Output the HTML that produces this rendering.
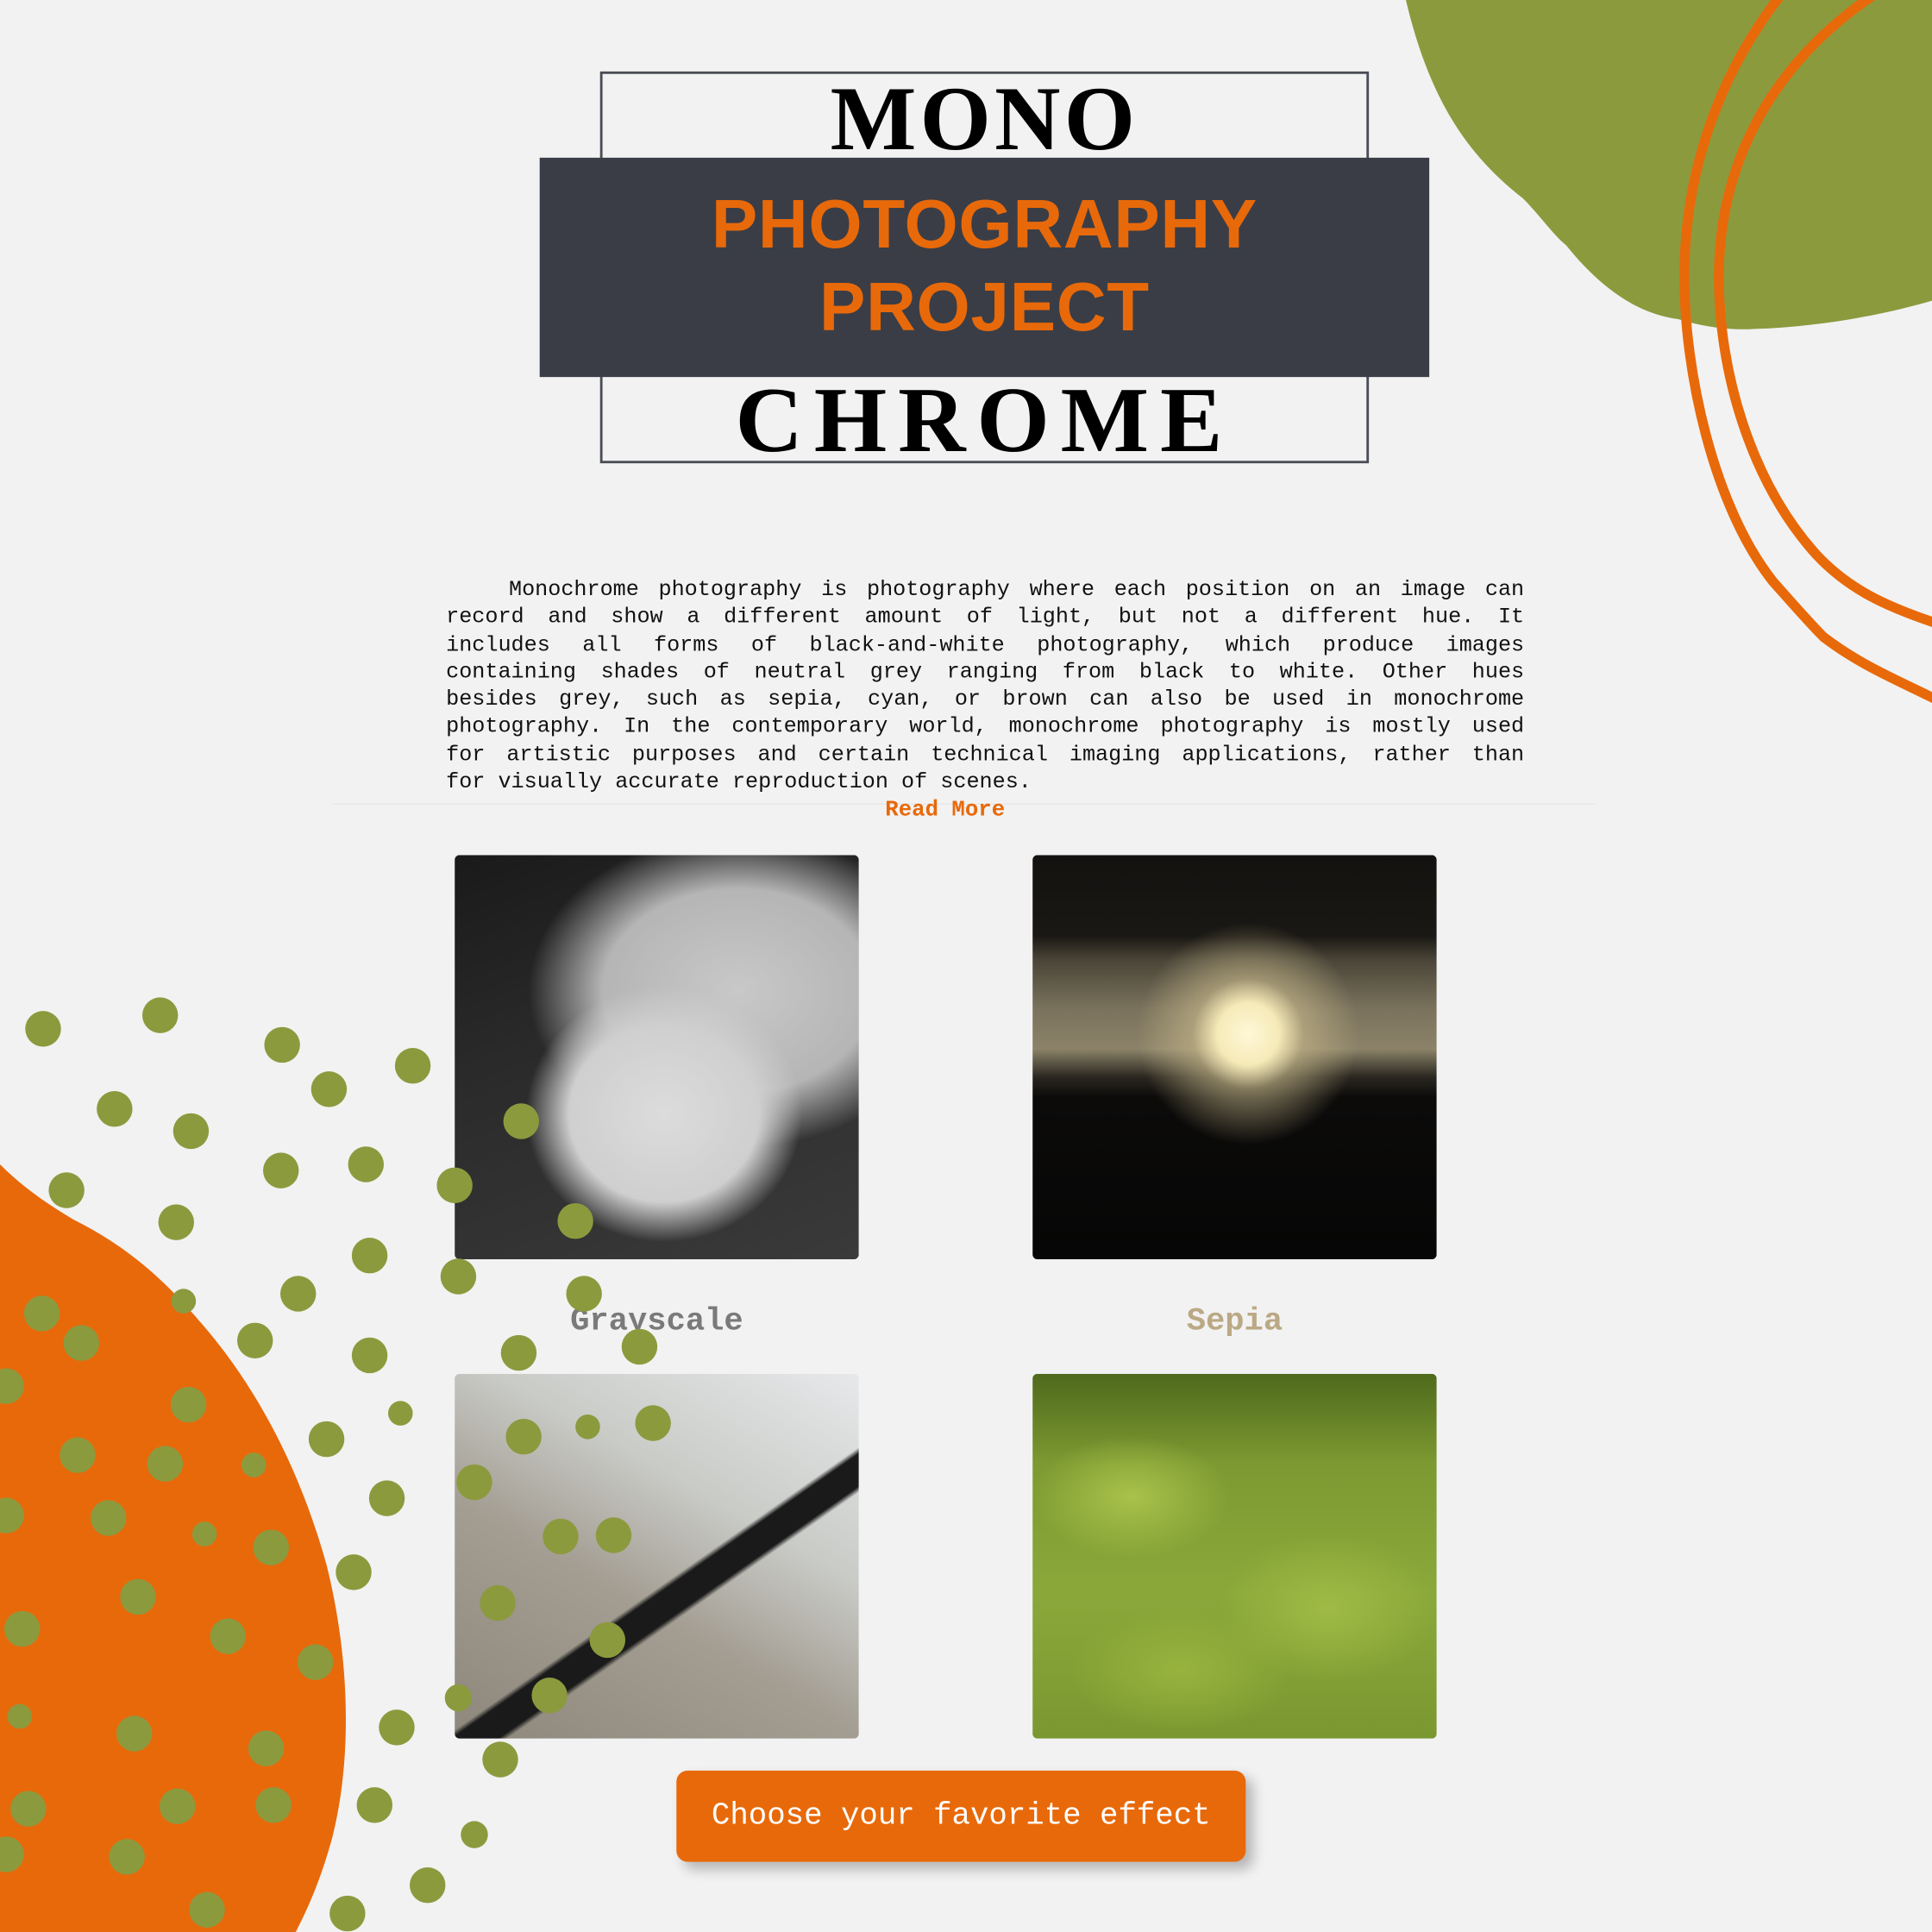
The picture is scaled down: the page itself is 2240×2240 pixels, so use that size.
<!DOCTYPE html>
<html><head><meta charset="utf-8"><style>
html,body{margin:0;padding:0;width:2240px;height:2240px;overflow:hidden;background:#f2f2f2}
#w{position:absolute;left:0;top:0;width:1568px;height:1568px;transform:scale(1.428571);transform-origin:0 0;background:#f2f2f2;overflow:hidden}
.abs{position:absolute}
svg.bg{position:absolute;left:0;top:0}
.frame{left:487px;top:58px;width:620px;height:314px;border:2px solid #4a4d55}
.dark{left:438px;top:128px;width:722px;height:178px;background:#3a3d46}
.mono{left:438px;width:722px;text-align:center;font-family:"Liberation Serif",serif;font-weight:bold;color:#000}
.ph{left:438px;width:722px;text-align:center;font-family:"Liberation Sans",sans-serif;font-weight:bold;color:#e8690a;font-size:56px;line-height:67px;top:148px;letter-spacing:0.5px}
.para{left:362px;top:468px;width:875px;font-family:"Liberation Mono",monospace;font-size:17.6px;line-height:22.3px;color:#111}
.para div{text-align:justify;text-align-last:justify;white-space:nowrap}
.img{border-radius:4px;overflow:hidden}
.lbl{font-family:"Liberation Mono",monospace;font-weight:bold;font-size:26px;text-align:center;width:328px}
</style></head><body><div id="w">
<svg class="bg" width="1568" height="1568" viewBox="0 0 1568 1568">
<path d="M1141,0 C1160,80 1190,125 1236,161 C1250,175 1260,190 1271,199 C1300,235 1330,255 1362,259 C1385,266 1405,268 1424,267 C1480,265 1530,255 1568,244 L1568,0 Z" fill="#8c9a3e"/>
<path d="M1446,-5 C1395,60 1367,140 1367,225 C1367,300 1390,410 1439,472 C1455,490 1468,505 1480,517 C1510,540 1540,552 1572,568" fill="none" stroke="#e8690a" stroke-width="8"/>
<path d="M1522,-5 C1440,50 1395,130 1395,225 C1395,300 1420,390 1474,450 C1500,478 1530,492 1572,506" fill="none" stroke="#e8690a" stroke-width="8"/>
</svg>
<div class="abs frame"></div>
<div class="abs dark"></div>
<div class="abs mono" style="top:52px;font-size:74px;line-height:90px;letter-spacing:3px">MONO</div>
<div class="abs mono" style="top:296px;font-size:76px;line-height:90px;letter-spacing:9px">CHROME</div>
<div class="abs ph">PHOTOGRAPHY<br>PROJECT</div>
<div class="abs para">
<div style="text-indent:51px">Monochrome photography is photography where each position on an image can</div>
<div>record and show a different amount of light, but not a different hue. It</div>
<div>includes all forms of black-and-white photography, which produce images</div>
<div>containing shades of neutral grey ranging from black to white. Other hues</div>
<div>besides grey, such as sepia, cyan, or brown can also be used in monochrome</div>
<div>photography. In the contemporary world, monochrome photography is mostly used</div>
<div>for artistic purposes and certain technical imaging applications, rather than</div>
<div style="text-align-last:left">for visually accurate reproduction of scenes.</div>
</div>
<div class="abs" style="left:270px;top:652px;width:1025px;height:1px;background:#e6e6e6"></div>
<div class="abs" style="left:600px;top:648px;width:334px;text-align:center;font-family:'Liberation Mono',monospace;font-weight:bold;font-size:18px;color:#e8690a">Read More</div>

<div class="abs img" style="left:369px;top:694px;width:328px;height:328px;background:
radial-gradient(ellipse 140px 130px at 170px 210px,#dcdcdc 0%,#cfcfcf 55%,rgba(190,190,190,0) 80%),
radial-gradient(ellipse 200px 150px at 230px 110px,#c8c8c8 0%,#b5b5b5 55%,rgba(120,120,120,0) 85%),
linear-gradient(160deg,#1a1a1a 0%,#2a2a2a 40%,#3a3a3a 100%)"></div>
<div class="abs img" style="left:838px;top:694px;width:328px;height:328px;background:
radial-gradient(circle at 175px 145px,#fff8d8 0,#f5eab8 25px,rgba(200,185,140,.6) 45px,rgba(120,110,85,0) 90px),
linear-gradient(180deg,#131210 0%,#1a1814 20%,#4a4538 26%,#7a725c 38%,#8b8268 48%,#2a2720 55%,#0c0b0a 60%,#060606 100%)"></div>
<div class="abs lbl" style="left:369px;top:1057px;color:#7a7a7a">Grayscale</div>
<div class="abs lbl" style="left:838px;top:1057px;color:#bba985">Sepia</div>
<div class="abs img" style="left:369px;top:1115px;width:328px;height:296px;background:
linear-gradient(145deg,rgba(0,0,0,0) 55%,#1a1a1a 56%,#1a1a1a 61%,rgba(0,0,0,0) 62%),
linear-gradient(30deg,#8d877c 0%,#a39d92 40%,#c9cbc7 65%,#e6e8ea 100%)"></div>
<div class="abs img" style="left:838px;top:1115px;width:328px;height:296px;background:
radial-gradient(ellipse 80px 50px at 80px 100px,#a8c24a,rgba(0,0,0,0)),
radial-gradient(ellipse 90px 60px at 240px 190px,#9fbb45,rgba(0,0,0,0)),
radial-gradient(ellipse 90px 50px at 120px 240px,#98b43e,rgba(0,0,0,0)),
linear-gradient(180deg,#4f6a1c 0%,#7d9a32 25%,#8aa83a 60%,#7a9830 100%)"></div>
<div class="abs" style="left:549px;top:1437px;width:462px;height:74px;background:#e8690a;border-radius:9px;box-shadow:6px 6px 10px rgba(0,0,0,.25);color:#fff;font-family:'Liberation Mono',monospace;font-size:25px;line-height:74px;text-align:center">Choose your favorite effect</div>

<svg class="bg" width="1568" height="1568" viewBox="0 0 1568 1568">
<path d="M0,945 C20,965 40,978 60,990 C100,1010 130,1035 160,1070 C200,1115 240,1180 265,1270 C285,1350 285,1430 270,1490 C262,1520 252,1545 240,1568 L0,1568 Z" fill="#e8690a"/>
<g fill="#8c9a3e">
<circle cx="35" cy="835" r="14.5"/><circle cx="130" cy="824" r="14.5"/><circle cx="229" cy="848" r="14.5"/><circle cx="267" cy="884" r="14.5"/><circle cx="335" cy="865" r="14.5"/><circle cx="93" cy="900" r="14.5"/><circle cx="155" cy="918" r="14.5"/><circle cx="423" cy="910" r="14.5"/><circle cx="54" cy="966" r="14.5"/><circle cx="228" cy="950" r="14.5"/><circle cx="297" cy="945" r="14.5"/><circle cx="369" cy="962" r="14.5"/><circle cx="143" cy="992" r="14.5"/><circle cx="467" cy="991" r="14.5"/><circle cx="300" cy="1019" r="14.5"/><circle cx="372" cy="1036" r="14.5"/><circle cx="242" cy="1050" r="14.5"/><circle cx="149" cy="1056" r="10"/><circle cx="474" cy="1050" r="14.5"/><circle cx="34" cy="1066" r="14.5"/><circle cx="66" cy="1090" r="14.5"/><circle cx="207" cy="1088" r="14.5"/><circle cx="421" cy="1098" r="14.5"/><circle cx="519" cy="1093" r="14.5"/><circle cx="300" cy="1100" r="14.5"/><circle cx="5" cy="1125" r="14.5"/><circle cx="153" cy="1140" r="14.5"/><circle cx="325" cy="1147" r="10"/><circle cx="530" cy="1155" r="14.5"/><circle cx="265" cy="1168" r="14.5"/><circle cx="425" cy="1166" r="14.5"/><circle cx="477" cy="1158" r="10"/><circle cx="63" cy="1181" r="14.5"/><circle cx="134" cy="1188" r="14.5"/><circle cx="206" cy="1189" r="10"/><circle cx="385" cy="1203" r="14.5"/><circle cx="314" cy="1216" r="14.5"/><circle cx="5" cy="1230" r="14.5"/><circle cx="88" cy="1232" r="14.5"/><circle cx="166" cy="1245" r="10"/><circle cx="220" cy="1256" r="14.5"/><circle cx="455" cy="1247" r="14.5"/><circle cx="498" cy="1246" r="14.5"/><circle cx="287" cy="1276" r="14.5"/><circle cx="112" cy="1296" r="14.5"/><circle cx="404" cy="1301" r="14.5"/><circle cx="18" cy="1322" r="14.5"/><circle cx="185" cy="1328" r="14.5"/><circle cx="493" cy="1331" r="14.5"/><circle cx="256" cy="1349" r="14.5"/><circle cx="372" cy="1378" r="11"/><circle cx="446" cy="1376" r="14.5"/><circle cx="16" cy="1393" r="10"/><circle cx="109" cy="1407" r="14.5"/><circle cx="322" cy="1402" r="14.5"/><circle cx="216" cy="1419" r="14.5"/><circle cx="406" cy="1428" r="14.5"/><circle cx="23" cy="1468" r="14.5"/><circle cx="144" cy="1466" r="14.5"/><circle cx="222" cy="1465" r="14.5"/><circle cx="304" cy="1465" r="14.5"/><circle cx="5" cy="1505" r="14.5"/><circle cx="103" cy="1507" r="14.5"/><circle cx="385" cy="1489" r="11"/><circle cx="347" cy="1530" r="14.5"/><circle cx="168" cy="1550" r="14.5"/><circle cx="282" cy="1553" r="14.5"/>
</g>
</svg>
</div></body></html>
